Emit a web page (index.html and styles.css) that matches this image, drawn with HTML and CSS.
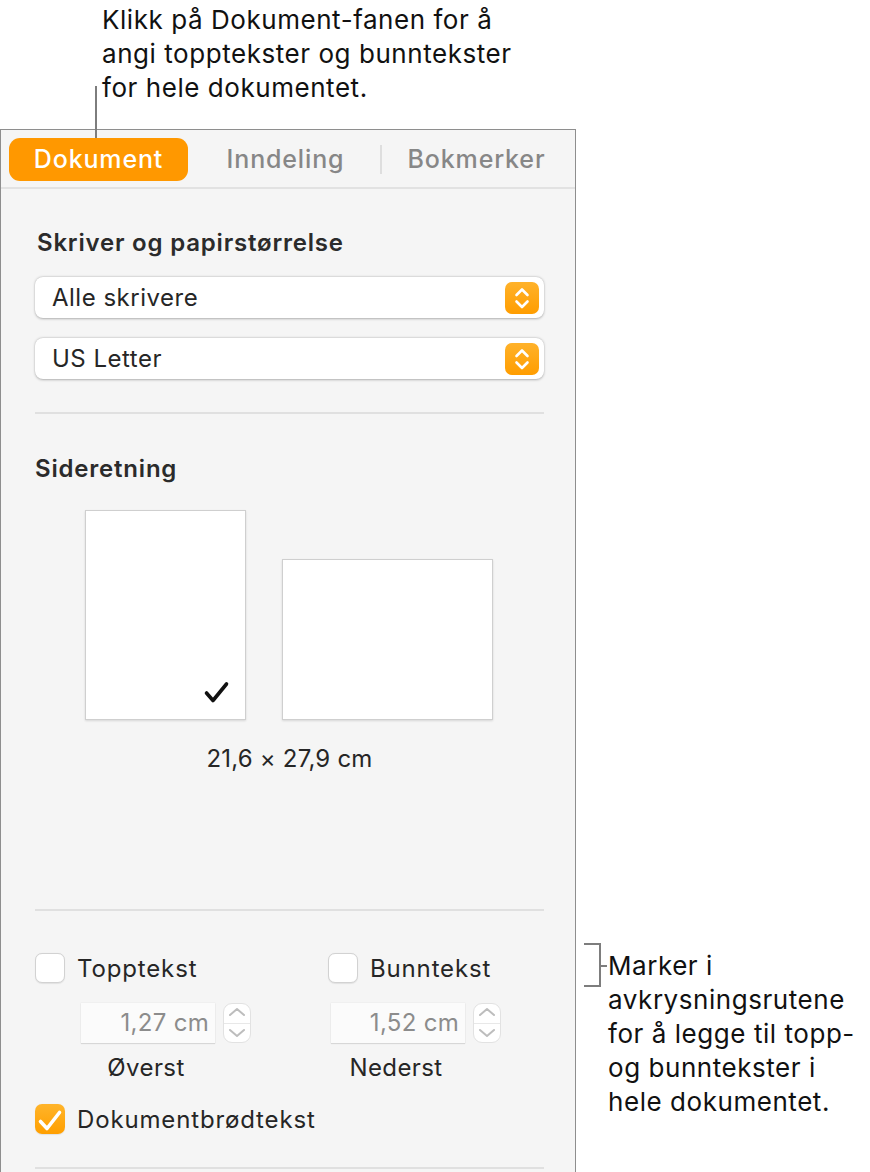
FILE: index.html
```html
<!DOCTYPE html>
<html lang="nb">
<head>
<meta charset="utf-8">
<title>Dokument</title>
<link rel="stylesheet" href="styles.css">
</head>
<body>
<div class="page">
  <header class="top-callout">
    <p class="callout-text">Klikk på Dokument-fanen for å<br>angi topptekster og bunntekster<br>for hele dokumentet.</p>
    <span class="leader-v"></span>
  </header>
  <div class="main">
    <section class="panel">
      <nav class="tabs">
        <span class="tab tab-active">Dokument</span>
        <span class="tab tab-mid">Inndeling</span>
        <span class="tab-sep"></span>
        <span class="tab tab-last">Bokmerker</span>
      </nav>
      <div class="content">
        <h2 class="heading heading-first">Skriver og papirstørrelse</h2>
        <div class="popup popup-first">
          <span class="popup-label">Alle skrivere</span>
          <span class="popup-btn"><svg width="34" height="32" viewBox="0 0 34 32"><path d="M11.5 13 L17 7.5 L22.5 13 M11.5 19.5 L17 25 L22.5 19.5" fill="none" stroke="#fff" stroke-width="2.6" stroke-linecap="round" stroke-linejoin="round"/></svg></span>
        </div>
        <div class="popup popup-second">
          <span class="popup-label">US Letter</span>
          <span class="popup-btn"><svg width="34" height="32" viewBox="0 0 34 32"><path d="M11.5 13 L17 7.5 L22.5 13 M11.5 19.5 L17 25 L22.5 19.5" fill="none" stroke="#fff" stroke-width="2.6" stroke-linecap="round" stroke-linejoin="round"/></svg></span>
        </div>
        <hr class="rule rule-1">
        <h2 class="heading heading-orient">Sideretning</h2>
        <div class="pages">
          <div class="sheet sheet-portrait">
            <svg class="sheet-check" width="161" height="210" viewBox="0 0 161 210"><path d="M121.5 183 L128 190.5 L141.5 174" fill="none" stroke="#111" stroke-width="3.6" stroke-linecap="round" stroke-linejoin="round"/></svg>
          </div>
          <div class="sheet sheet-landscape"></div>
        </div>
        <p class="dims">21,6 × 27,9 cm</p>
        <hr class="rule rule-2">
        <div class="hf-grid">
          <label class="check-row">
            <span class="box"></span>
            <span class="check-label">Topptekst</span>
          </label>
          <label class="check-row">
            <span class="box"></span>
            <span class="check-label">Bunntekst</span>
          </label>
          <div class="field-group field-group-1">
            <div class="field-row">
              <span class="field">1,27 cm</span>
              <span class="stepper"><svg width="28" height="40" viewBox="0 0 28 40"><path d="M7 12 L14 6 L21 12 M7 27 L14 33 L21 27" fill="none" stroke="#bdbdbd" stroke-width="2" stroke-linecap="round" stroke-linejoin="round"/></svg></span>
            </div>
            <span class="field-caption">Øverst</span>
          </div>
          <div class="field-group field-group-2">
            <div class="field-row">
              <span class="field">1,52 cm</span>
              <span class="stepper"><svg width="28" height="40" viewBox="0 0 28 40"><path d="M7 12 L14 6 L21 12 M7 27 L14 33 L21 27" fill="none" stroke="#bdbdbd" stroke-width="2" stroke-linecap="round" stroke-linejoin="round"/></svg></span>
            </div>
            <span class="field-caption">Nederst</span>
          </div>
        </div>
        <label class="check-row check-body">
          <span class="box box-on"><svg width="30" height="30" viewBox="0 0 30 30"><path d="M5.5 17.5 L12 24.5 L24.5 8.5" fill="none" stroke="#fff" stroke-width="3.6" stroke-linecap="round" stroke-linejoin="round"/></svg></span>
          <span class="check-label">Dokumentbrødtekst</span>
        </label>
        <hr class="rule rule-3">
      </div>
    </section>
    <aside class="side-callout">
      <span class="bracket"></span>
      <span class="leader-h"></span>
      <p class="callout-text">Marker i<br>avkrysningsrutene<br>for å legge til topp-<br>og bunntekster i<br>hele dokumentet.</p>
    </aside>
  </div>
</div>
</body>
</html>
```

FILE: styles.css
```css
* { box-sizing: border-box; }

html, body {
  margin: 0;
  padding: 0;
  background: #ffffff;
}

body {
  width: 870px;
  height: 1172px;
  overflow: hidden;
  font-family: Inter, "Noto Sans", "Liberation Sans", sans-serif;
  color: #1f1f1f;
}

.page {
  position: relative;
}

.callout-text {
  margin: 0;
  font-size: 26px;
  line-height: 34px;
  color: #111;
  letter-spacing: 0.55px;
}

.top-callout {
  height: 129px;
  padding: 3px 0 0 102px;
}

.leader-v {
  position: absolute;
  left: 95px;
  top: 86px;
  width: 2px;
  height: 52px;
  background: #7d7d7d;
  z-index: 2;
}

.main {
  display: flex;
  align-items: flex-start;
}

.panel {
  width: 576px;
  height: 1060px;
  flex: none;
  background: #f5f5f5;
  border: 1px solid #8e8e8e;
}

/* tabs */
.tabs {
  height: 59px;
  display: flex;
  align-items: flex-start;
  border-bottom: 2px solid #e2e2e2;
}

.tab {
  font-size: 25px;
  line-height: 43px;
  height: 43px;
  margin-top: 8px;
  text-align: center;
  color: #878787;
  font-weight: 500;
  letter-spacing: 0.85px;
}

.tab-active {
  width: 179px;
  margin-left: 8px;
  background: #ff9800;
  border-radius: 11px;
  color: #fff;
}

.tab-mid {
  width: 192px;
  padding-left: 3px;
}

.tab-sep {
  width: 2px;
  height: 29px;
  margin-top: 15px;
  background: #dedede;
}

.tab-last {
  width: 189px;
}

/* content */
.content {
  padding: 0 31px 0 34px;
}

.heading {
  margin: 0;
  font-size: 24px;
  line-height: 28px;
  font-weight: 600;
  color: #2b2b2b;
  letter-spacing: 0.8px;
}

.heading-first { margin-top: 40px; padding-left: 2px; }

.popup {
  height: 41px;
  background: #fff;
  border-radius: 8px;
  box-shadow: 0 0.5px 2.5px rgba(0, 0, 0, 0.28), 0 0 0 0.5px rgba(0, 0, 0, 0.04);
  display: flex;
  align-items: center;
  justify-content: space-between;
  padding: 0 5px 0 17px;
}

.popup-first { margin-top: 20px; }
.popup-second { margin-top: 20px; }

.popup-label {
  font-size: 24px;
  color: #262626;
  letter-spacing: 0.5px;
}

.popup-btn {
  width: 34px;
  height: 32px;
  border-radius: 7px;
  background: linear-gradient(#ffb22a, #ff9d00);
  display: flex;
}

.rule {
  margin: 0;
  border: 0;
  height: 2px;
  background: #e0e0e0;
}

.rule-1 { margin-top: 33px; }

.heading-orient { margin-top: 41px; }

.pages {
  margin-top: 27px;
  display: flex;
  align-items: flex-end;
  justify-content: center;
  gap: 36px;
  padding-right: 2px;
}

.sheet {
  background: #fff;
  border: 1px solid #cfcfcf;
  box-shadow: 0 1px 2px rgba(0, 0, 0, 0.12);
}

.sheet-portrait {
  width: 161px;
  height: 210px;
}

.sheet-check {
  display: block;
  margin: -1px;
}

.sheet-landscape {
  width: 211px;
  height: 161px;
}

.dims {
  margin: 25px 0 0;
  text-align: center;
  font-size: 24px;
  line-height: 28px;
  color: #262626;
  letter-spacing: 0.2px;
}

.rule-2 { margin-top: 136px; }

/* header / footer options */
.hf-grid {
  margin-top: 42px;
  display: grid;
  grid-template-columns: 293px 1fr;
  row-gap: 20px;
}

.check-row {
  display: flex;
  align-items: center;
  gap: 12px;
  height: 30px;
}

.box {
  width: 30px;
  height: 30px;
  flex: none;
  border-radius: 7px;
  background: #fff;
  border: 1px solid #d2d2d2;
  box-shadow: 0 0.5px 1px rgba(0, 0, 0, 0.08);
}

.box-on {
  border: 0;
  background: linear-gradient(#ffb42a, #ff9f00);
  display: flex;
}

.check-label {
  font-size: 24px;
  color: #262626;
  letter-spacing: 0.85px;
}

.field-group {
  display: flex;
  flex-direction: column;
  align-items: flex-start;
}

.field-group-1 { margin-left: 46px; }
.field-group-2 { margin-left: 3px; }

.field-row {
  display: flex;
  gap: 8px;
  align-items: center;
}

.field {
  width: 134px;
  height: 40px;
  background: #fbfbfb;
  box-shadow: 0 1px 1px rgba(0, 0, 0, 0.1), 0 0 0 0.5px rgba(0, 0, 0, 0.04);
  font-size: 24px;
  line-height: 40px;
  color: #8c8c8c;
  text-align: right;
  padding-right: 6px;
  letter-spacing: 0.3px;
}

.stepper {
  width: 28px;
  height: 40px;
  border-radius: 9px;
  background: #fff;
  border: 1px solid #e2e2e2;
  position: relative;
  display: flex;
}

.stepper svg {
  margin: -1px;
}

.stepper::after {
  content: "";
  position: absolute;
  left: 0;
  right: 0;
  top: 19px;
  height: 1px;
  background: #e8e8e8;
}

.field-caption {
  width: 134px;
  margin-top: 11px;
  text-align: center;
  font-size: 24px;
  line-height: 28px;
  color: #262626;
  letter-spacing: 0.4px;
  padding-right: 4px;
}

.check-body { margin-top: 22px; }

.rule-3 { margin-top: 33px; }

/* side callout */
.side-callout {
  position: relative;
  margin-top: 820px;
  padding-left: 32px;
}

.bracket {
  position: absolute;
  left: 8px;
  top: -6px;
  width: 17px;
  height: 44px;
  border: 2px solid #7d7d7d;
  border-left: 0;
}

.leader-h {
  position: absolute;
  left: 23px;
  top: 16px;
  width: 8px;
  height: 2px;
  background: #7d7d7d;
}
```
